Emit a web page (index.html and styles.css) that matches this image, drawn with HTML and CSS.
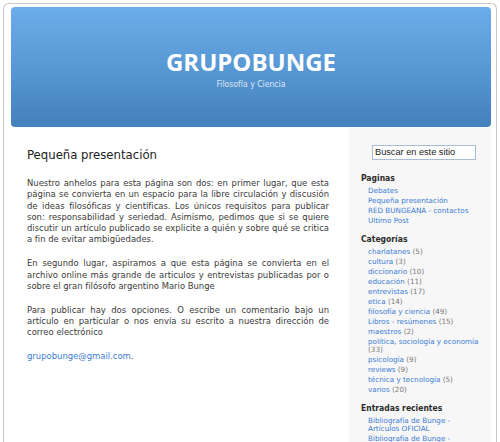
FILE: index.html
```html
<!DOCTYPE html>
<html lang="es">
<head>
<meta charset="utf-8">
<title>GRUPOBUNGE</title>
<link rel="stylesheet" href="styles.css">
</head>
<body>
<div class="page">
  <header class="banner">
    <h1 class="banner-title">GRUPOBUNGE</h1>
    <p class="banner-sub">Filosofía y Ciencia</p>
  </header>
  <div class="columns">
    <main class="main">
      <h2 class="post-title">Pequeña presentación</h2>
      <p class="post-text">Nuestro anhelos para esta página son dos: en primer lugar, que esta página se convierta en un espacio para la libre circulación y discusión de ideas filosóficas y científicas. Los únicos requisitos para publicar son: responsabilidad y seriedad. Asimismo, pedimos que si se quiere discutir un artículo publicado se explicite a quién y sobre qué se critica a fin de evitar ambigüedades.</p>
      <p class="post-text">En segundo lugar, aspiramos a que esta página se convierta en el archivo online más grande de articulos y entrevistas publicadas por o sobre el gran filósofo argentino Mario Bunge</p>
      <p class="post-text">Para publicar hay dos opciones. O escribe un comentario bajo un artículo en particular o nos envía su escrito a nuestra dirección de correo electrónico</p>
      <p class="post-text"><a class="mail" href="#">grupobunge@gmail.com</a>.</p>
    </main>
    <aside class="sidebar">
      <div class="search"><span class="search-box">Buscar en este sitio</span></div>
      <section class="widget">
        <h3 class="widget-title">Paginas</h3>
        <ul class="links">
          <li><a href="#">Debates</a></li>
          <li><a href="#">Pequeña presentación</a></li>
          <li><a href="#">RED BUNGEANA - contactos</a></li>
          <li><a href="#">Ultimo Post</a></li>
        </ul>
      </section>
      <section class="widget">
        <h3 class="widget-title">Categorías</h3>
        <ul class="links">
          <li><a href="#">charlatanes</a> <span class="count">(5)</span></li>
          <li><a href="#">cultura</a> <span class="count">(3)</span></li>
          <li><a href="#">diccionario</a> <span class="count">(10)</span></li>
          <li><a href="#">educación</a> <span class="count">(11)</span></li>
          <li><a href="#">entrevistas</a> <span class="count">(17)</span></li>
          <li><a href="#">etica</a> <span class="count">(14)</span></li>
          <li><a href="#">filosofía y ciencia</a> <span class="count">(49)</span></li>
          <li><a href="#">Libros - resúmenes</a> <span class="count">(15)</span></li>
          <li><a href="#">maestros</a> <span class="count">(2)</span></li>
          <li><a href="#">política, sociología y economía</a> <span class="count">(33)</span></li>
          <li><a href="#">psicología</a> <span class="count">(9)</span></li>
          <li><a href="#">reviews</a> <span class="count">(9)</span></li>
          <li><a href="#">técnica y tecnología</a> <span class="count">(5)</span></li>
          <li><a href="#">varios</a> <span class="count">(20)</span></li>
        </ul>
      </section>
      <section class="widget">
        <h3 class="widget-title">Entradas recientes</h3>
        <ul class="links recent">
          <li><a href="#">Bibliografía de Bunge - Artículos OFICIAL</a></li>
          <li><a href="#">Bibliografía de Bunge - Libros OFICIAL</a></li>
          <li><a href="#">Entrevistas</a></li>
        </ul>
      </section>
    </aside>
  </div>
</div>
</body>
</html>
```

FILE: styles.css
```css
html, body {
  margin: 0;
  padding: 0;
  background: #ffffff;
  height: 100%;
  overflow: hidden;
}

.page {
  margin: 3px 3px 0 3px;
  border: 1px solid #c9c9c9;
  border-bottom: none;
  border-radius: 6px 6px 0 0;
  box-shadow: 0 0 1px #dcdcdc;
  padding: 3px 5px 0 7px;
  min-height: calc(100vh - 7px);
  display: flex;
  flex-direction: column;
  box-sizing: border-box;
}

.banner {
  height: 120px;
  border-radius: 4px;
  background: linear-gradient(to bottom, #6badea 0%, #5898d4 50%, #4480bb 100%);
  text-align: center;
  padding-top: 41px;
  box-sizing: border-box;
}

.banner-title {
  margin: 0;
  font-family: "Open Sans", sans-serif;
  font-weight: 700;
  font-size: 24px;
  line-height: 28px;
  color: #ffffff;
}

.banner-sub {
  margin: 3px 0 0;
  font-family: "DejaVu Sans Condensed", "DejaVu Sans", sans-serif;
  font-stretch: condensed;
  font-size: 8.6px;
  line-height: 11px;
  color: #dfe8f4;
}

.columns {
  flex: 1;
  display: flex;
  margin-top: 1px;
}

.main {
  flex: 1;
  padding: 19px 20px 0 16px;
  background: #ffffff;
}

.post-title {
  margin: 0 0 14px;
  font-family: "DejaVu Sans Condensed", "DejaVu Sans", sans-serif;
  font-stretch: condensed;
  font-weight: 400;
  font-size: 13px;
  line-height: 16px;
  color: #222222;
}

.post-text {
  margin: 0 0 12.6px;
  font-family: "DejaVu Sans Condensed", "DejaVu Sans", sans-serif;
  font-stretch: condensed;
  font-size: 9.4px;
  line-height: 11.3px;
  color: #3a3a3a;
  text-align: justify;
}

.mail {
  color: #3a7bd5;
  text-decoration: none;
}

.sidebar {
  width: 142px;
  flex: none;
  background: #f7f7f7;
  padding: 17px 6px 0 12px;
  box-sizing: border-box;
}

.search {
  padding-left: 11px;
  margin-bottom: 12px;
}

.search-box {
  display: block;
  width: 104px;
  height: 15px;
  box-sizing: border-box;
  border: 1px solid #a9bcd6;
  background: #ffffff;
  font-family: "Liberation Sans", Arial, sans-serif;
  font-size: 9.2px;
  line-height: 13px;
  padding-left: 2px;
  color: #222222;
  white-space: nowrap;
  overflow: hidden;
}

.widget {
  margin-bottom: 8px;
}

.widget-title {
  margin: 0 0 3px;
  font-family: "DejaVu Sans Condensed", "DejaVu Sans", sans-serif;
  font-stretch: condensed;
  font-weight: 700;
  font-size: 8.5px;
  line-height: 12px;
  color: #2a2a2a;
}

.links {
  list-style: none;
  margin: 0;
  padding: 0 0 0 7px;
  font-family: "DejaVu Sans", sans-serif;
  font-size: 7.2px;
  line-height: 8px;
}

.links.recent {
  padding-right: 30px;
}

.links li {
  margin-bottom: 2px;
}

.links a {
  color: #3a7bd5;
  text-decoration: none;
}

.count {
  color: #7a7a7a;
}
```
